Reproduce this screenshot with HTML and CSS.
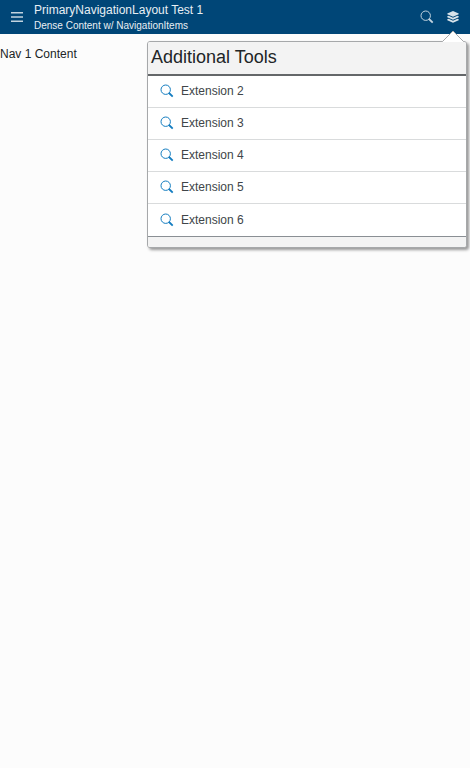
FILE: index.html
```html
<!DOCTYPE html>
<html lang="en">
<head>
<meta charset="utf-8">
<meta name="viewport" content="width=device-width, initial-scale=1">
<title>PrimaryNavigationLayout Test 1</title>
<link rel="stylesheet" href="styles.css">
</head>
<body>
<svg class="defs" aria-hidden="true">
  <symbol id="search" viewBox="0 0 14 14">
    <circle cx="5.700" cy="5.700" r="4.700" fill="none" stroke="currentColor" stroke-width="1"/>
    <path d="M9 9l3.700 3.700" fill="none" stroke="currentColor" stroke-width="1.800"/>
  </symbol>
</svg>
<header class="bar">
  <button class="icon-button" type="button" aria-label="Menu">
    <svg class="icon" viewBox="0 0 14 14"><path d="M1 2.700h12M1 7h12M1 11.300h12" fill="none" stroke="currentColor" stroke-width="1.600"/></svg>
  </button>
  <div class="titles">
    <h1 class="title">PrimaryNavigationLayout Test 1</h1>
    <p class="subtitle">Dense Content w/ NavigationItems</p>
  </div>
  <div class="actions">
    <button class="icon-button" type="button" aria-label="Search"><svg class="icon"><use href="#search"/></svg></button>
    <div class="tools">
      <button class="icon-button" type="button" aria-label="Additional Tools">
        <svg class="icon" viewBox="0 0 14 14" fill="currentColor">
          <path d="M7 .9l5.700 2.500v.9L7 6.800 1.300 4.300v-.9z"/>
          <path d="M1.300 6.300l1.200-.5L7 7.800l4.500-2 1.200.5v.9L7 9.700 1.300 7.200z"/>
          <path d="M1.300 9.300l1.200-.5L7 10.800l4.500-2 1.200.5v.9L7 12.700l-5.700-2.500z"/>
        </svg>
      </button>
      <section class="popup">
        <svg class="pointer" viewBox="0 0 22 12"><path d="M0 12L11 1l11 11z" fill="#fff"/><path d="M0 11.500h.5L11 1l10.500 10.500h.5" fill="none" stroke="#a6a8aa"/></svg>
        <h2 class="popup-title">Additional Tools</h2>
        <ul class="list">
          <li class="row"><a class="link" href="#"><svg class="icon blue"><use href="#search"/></svg>Extension 2</a></li>
          <li class="row"><a class="link" href="#"><svg class="icon blue"><use href="#search"/></svg>Extension 3</a></li>
          <li class="row"><a class="link" href="#"><svg class="icon blue"><use href="#search"/></svg>Extension 4</a></li>
          <li class="row"><a class="link" href="#"><svg class="icon blue"><use href="#search"/></svg>Extension 5</a></li>
          <li class="row"><a class="link" href="#"><svg class="icon blue"><use href="#search"/></svg>Extension 6</a></li>
        </ul>
        <div class="popup-footer"></div>
      </section>
    </div>
  </div>
</header>
<main class="content">Nav 1 Content</main>
</body>
</html>
```
FILE: styles.css
```css
* { box-sizing: border-box; }
body {
  min-height: 100vh;
  margin: 0;
  background: #fcfcfc;
  color: #212527;
  font: 12px/16px "Liberation Sans", Arial, sans-serif;
}
h1, h2, p, ul { margin: 0; padding: 0; font-weight: normal; }
.defs { display: none; }
.bar {
  display: flex;
  height: 34px;
  background: #004677;
  color: #e8eff4;
}
.icon-button {
  display: flex;
  align-items: center;
  justify-content: center;
  width: 26px;
  height: 34px;
  padding: 0;
  border: 0;
  background: none;
  color: #c2d3df;
}
.icon { width: 14px; height: 14px; flex: none; }
.bar > .icon-button { width: 34px; }
.titles { flex: 1; padding-top: 2px; white-space: nowrap; }
.title { font-size: 12px; line-height: 16px; }
.subtitle { font-size: 10px; line-height: 16px; }
.actions { display: flex; padding-right: 4px; }
.tools { position: relative; }
.tools .icon-button { color: #d8e3ea; }
.popup {
  position: absolute;
  top: 41px;
  right: -1px;
  width: 320px;
  border: 1px solid #a6a8aa;
  border-radius: 3px;
  background: #fff;
  box-shadow: 2px 2px 3px rgba(0, 0, 0, 0.4);
  color: #212527;
}
.pointer {
  position: absolute;
  top: -12px;
  right: 2px;
  width: 22px;
  height: 12px;
}
.popup-title {
  padding: 3px 3px 5px;
  border-bottom: 2px solid #646769;
  border-radius: 2px 2px 0 0;
  background: #f3f3f3;
  font-size: 18px;
  line-height: 24px;
}
.list { list-style: none; }
.row { border-bottom: 1px solid #d9dbdc; }
.row:last-child { border-bottom-color: #8a8f94; }
.link {
  display: flex;
  align-items: center;
  gap: 7px;
  height: 31px;
  padding: 0 12px 1px;
  color: #404549;
  text-decoration: none;
}
.row:last-child .link { height: 32px; }
.blue { color: #127cc0; }
.popup-footer { height: 10px; border-radius: 0 0 2px 2px; background: #f3f3f3; }
.content { padding-top: 12px; }
```
